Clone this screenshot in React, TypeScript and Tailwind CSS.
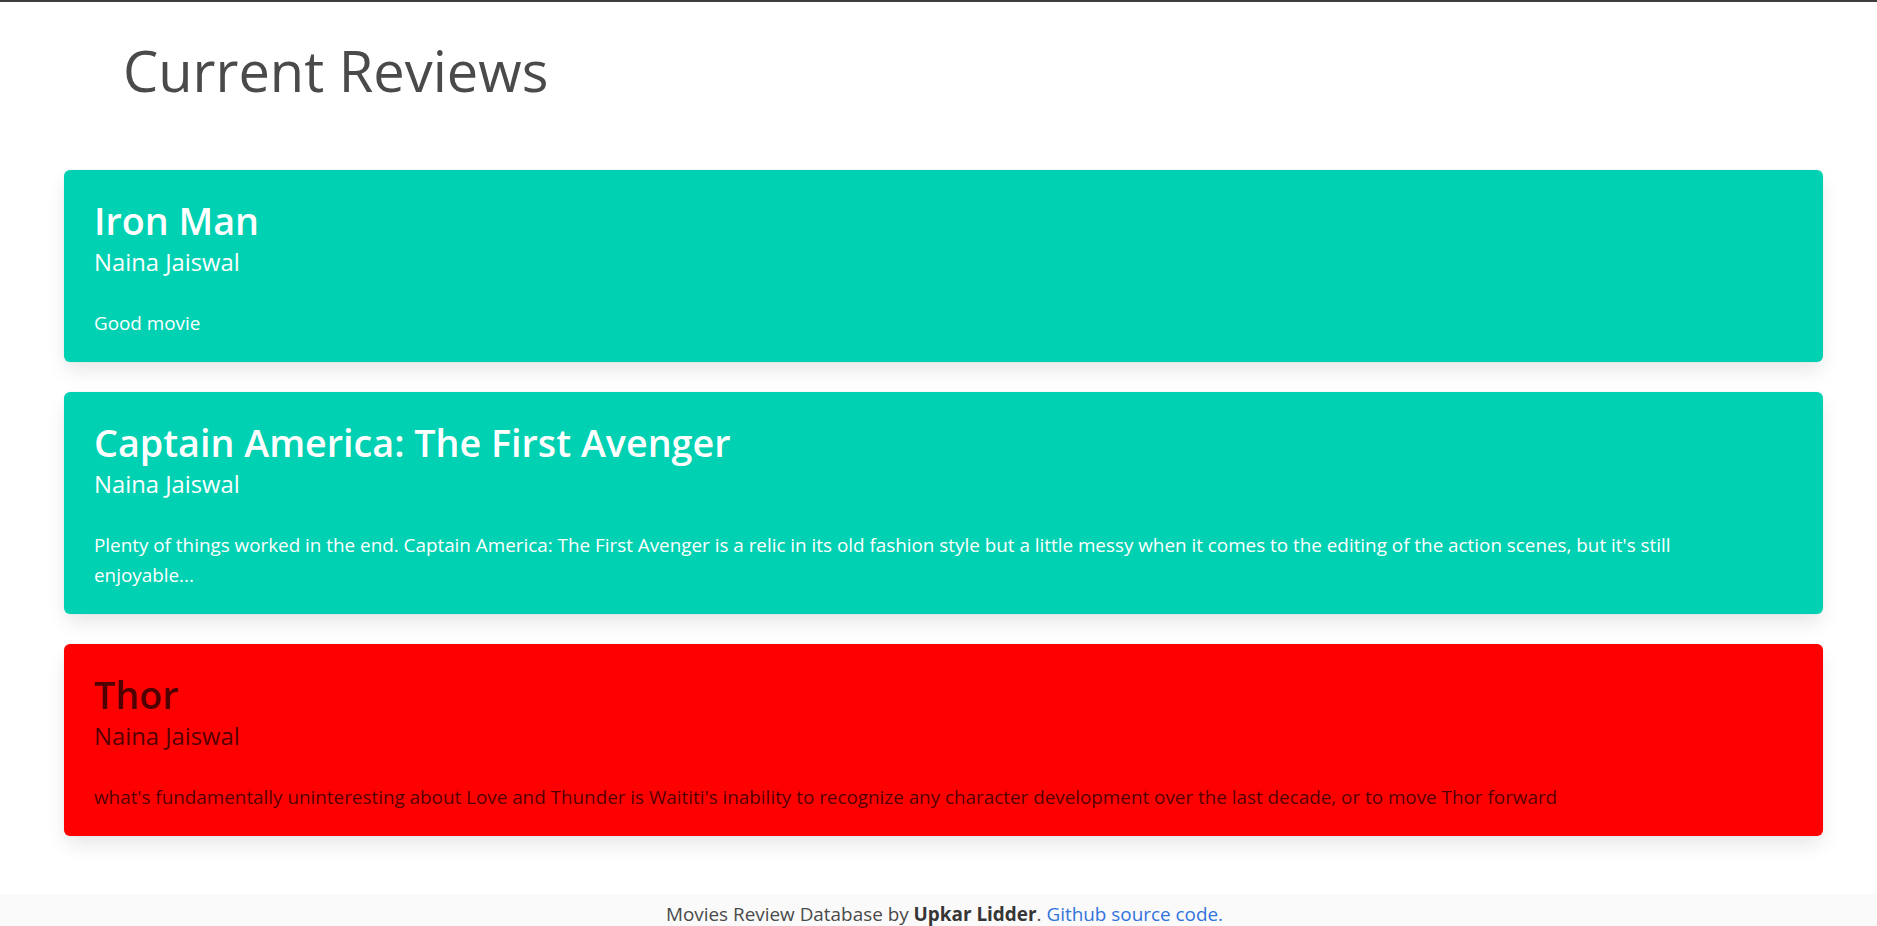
import React from "react";

type Review = {
  title: string;
  author: string;
  text: string;
  danger?: boolean;
};

const reviews: Review[] = [
  { title: "Iron Man", author: "Naina Jaiswal", text: "Good movie" },
  {
    title: "Captain America: The First Avenger",
    author: "Naina Jaiswal",
    text:
      "Plenty of things worked in the end. Captain America: The First Avenger is a relic in its old fashion style but a little messy when it comes to the editing of the action scenes, but it's still enjoyable...",
  },
  {
    title: "Thor",
    author: "Naina Jaiswal",
    text:
      "what's fundamentally uninteresting about Love and Thunder is Waititi's inability to recognize any character development over the last decade, or to move Thor forward",
    danger: true,
  },
];

function Card({ r }: { r: Review }) {
  const base = r.danger
    ? "bg-[#ff0000] text-[rgba(0,0,0,0.7)]"
    : "bg-[#00d1b2] text-white";
  return (
    <div
      className={`${base} rounded-[6px] shadow-[0_10px_20px_-2.5px_rgba(10,10,10,0.1),0_0_0_1px_rgba(10,10,10,0.02)] pt-[28px] pb-[24px] pl-[30px] pr-[30px]`}
    >
      <div className="text-[37.7px] leading-[45px] font-semibold">{r.title}</div>
      <div className="mt-[4px] text-[23.8px] leading-[30px]">{r.author}</div>
      <p className="mt-[31px] text-[18.85px] leading-[30px] max-w-[1640px]">{r.text}</p>
    </div>
  );
}

export default function App() {
  return (
    <div
      className="min-h-[926px] bg-white border-t-2 border-[#3d3d3d] flex flex-col"
      style={{ fontFamily: '"Open Sans", "Noto Sans", sans-serif' }}
    >
      <h1 className="mt-[35px] ml-[123px] text-[56px] leading-[66px] font-normal text-[#4a4a4a]">
        Current Reviews
      </h1>
      <div className="mt-[67px] ml-[64px] mr-[54px] flex flex-col gap-[30px]">
        {reviews.map((r) => (
          <Card key={r.title} r={r} />
        ))}
      </div>
      <footer className="mt-[58px] flex-1 bg-[#fafafa] pt-[5px] pb-[60px] pl-[12px] text-center text-[18.9px] leading-[30px] text-[#4a4a4a]">
        Movies Review Database by <strong className="font-bold text-[#363636]">Upkar Lidder</strong>.{" "}
        <a href="#" className="text-[#3273dc]">
          Github source code.
        </a>
      </footer>
    </div>
  );
}
